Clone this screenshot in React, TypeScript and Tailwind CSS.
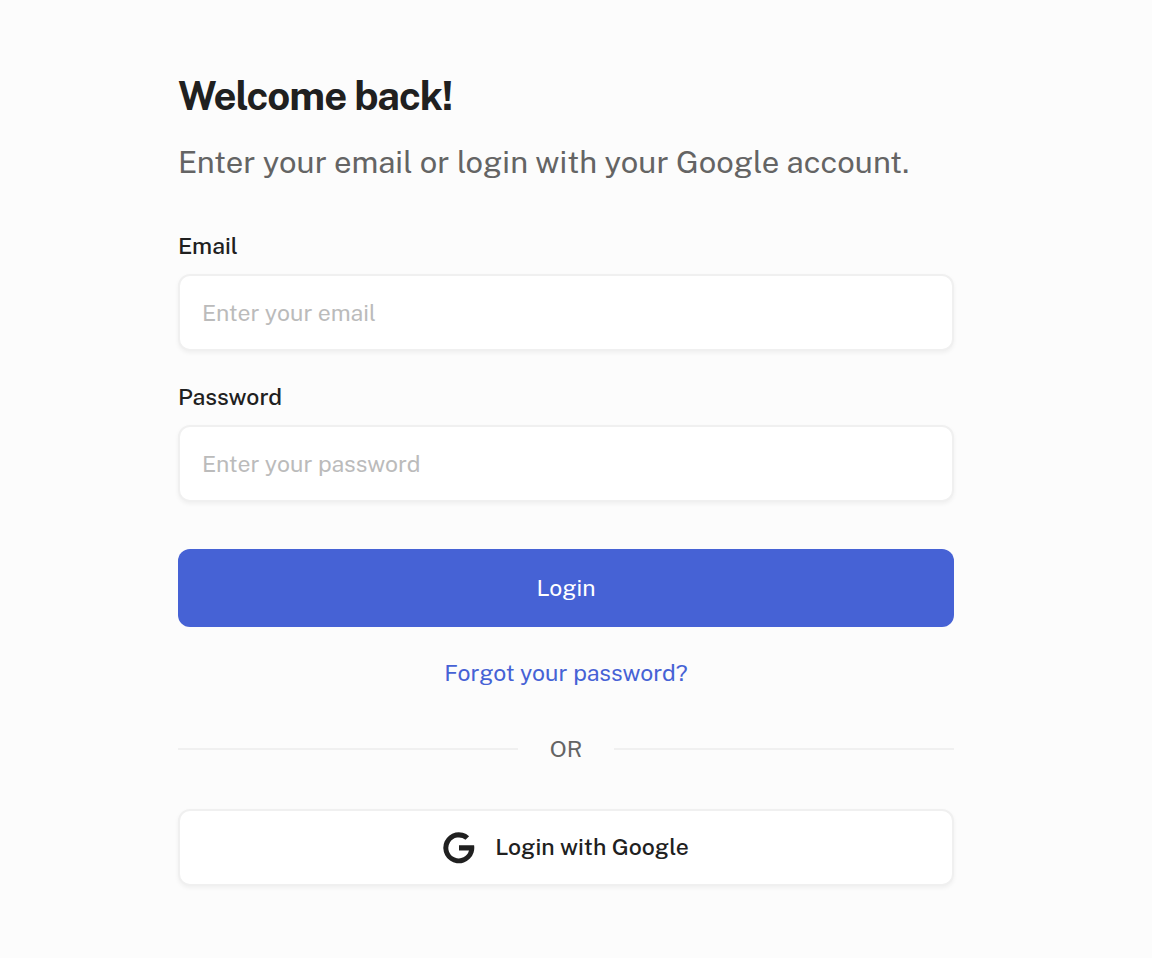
import { useState, type FormEvent } from "react";

interface FieldProps {
  id: string;
  label: string;
  type: string;
  placeholder: string;
  value: string;
  onChange: (value: string) => void;
}

function Field({ id, label, type, placeholder, value, onChange }: FieldProps) {
  return (
    <div className="flex flex-col gap-3">
      <label
        htmlFor={id}
        className="text-[23px] leading-8 font-medium text-[#202020]"
      >
        {label}
      </label>
      <input
        id={id}
        type={type}
        placeholder={placeholder}
        value={value}
        onChange={(e) => onChange(e.target.value)}
        className="h-[77px] w-full rounded-xl border-2 border-[#f0f0f0] bg-white px-[22px] text-[23px] text-[#202020] shadow-[0_2px_4px_rgba(0,0,0,0.05)] outline-none placeholder:text-[#bbbbbb] focus:border-[#4662d5]"
      />
    </div>
  );
}

function GoogleIcon() {
  return (
    <svg width="32" height="32" viewBox="0 0 32 32" aria-hidden="true">
      <path
        d="M26.1 4.2 22.5 7.8A10.5 10.5 0 1 0 26 18.6H16V13.3H31.1A15.5 15.5 0 1 1 26.1 4.2Z"
        fill="currentColor"
      />
    </svg>
  );
}

export default function App() {
  const [email, setEmail] = useState("");
  const [password, setPassword] = useState("");

  const handleSubmit = (e: FormEvent) => {
    e.preventDefault();
  };

  return (
    <main className="min-h-screen bg-[#fcfcfc] pt-[72px] pr-[198px] pb-[71px] pl-[178px] font-['Public_Sans','Inter',sans-serif]">
      <h1 className="text-[40px] leading-12 font-bold tracking-tight text-[#202020]">
        Welcome back!
      </h1>
      <p className="mt-5 text-[31px] leading-11 text-[#646464]">
        Enter your email or login with your Google account.
      </p>

      <form onSubmit={handleSubmit} className="mt-[46px]">
        <div className="flex flex-col gap-[30px]">
          <Field
            id="email"
            label="Email"
            type="email"
            placeholder="Enter your email"
            value={email}
            onChange={setEmail}
          />
          <Field
            id="password"
            label="Password"
            type="password"
            placeholder="Enter your password"
            value={password}
            onChange={setPassword}
          />
        </div>
        <button
          type="submit"
          className="mt-[47px] h-[78px] w-full rounded-xl bg-[#4662d5] text-[23px] text-white"
        >
          Login
        </button>
      </form>

      <div className="mt-[30px] text-center text-[23px] leading-8">
        <a href="#forgot" className="text-[#4662d5]">
          Forgot your password?
        </a>
      </div>

      <div className="mt-11 flex items-center gap-8 text-[23px] leading-8 text-[#646464]">
        <span className="h-0.5 flex-1 bg-[#f0f0f0]" />
        OR
        <span className="h-0.5 flex-1 bg-[#f0f0f0]" />
      </div>

      <button
        type="button"
        className="mt-11 flex h-[77px] w-full items-center justify-center gap-5 rounded-xl border-2 border-[#f0f0f0] bg-white text-[23px] font-medium text-[#202020] shadow-[0_2px_4px_rgba(0,0,0,0.05)]"
      >
        <GoogleIcon />
        Login with Google
      </button>
    </main>
  );
}
